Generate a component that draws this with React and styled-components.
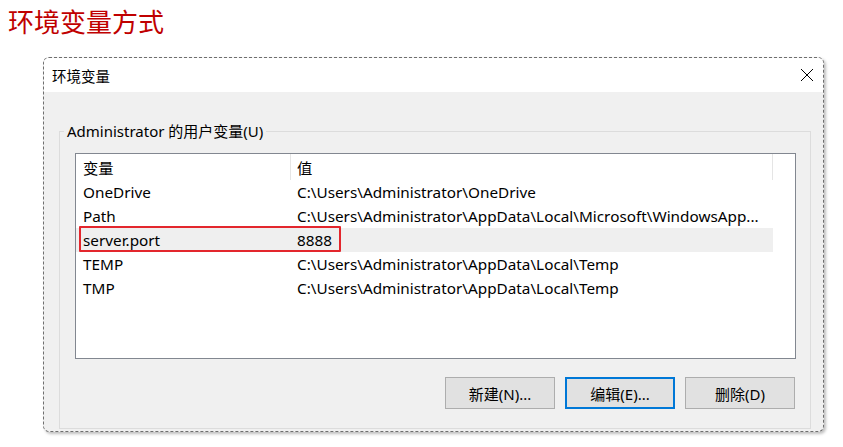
import React from 'react'
import styled, { createGlobalStyle } from 'styled-components'

const GlobalStyle = createGlobalStyle`
    body {
        margin: 0;
        background: #fff;
        font-family: "Noto Sans", "Noto Sans CJK SC", sans-serif;
    }
`

const Page = styled.div`
    width: 843px;
    height: 447px;
    padding: 4px 0 0 8px;
    box-sizing: border-box;
`

const Heading = styled.h1`
    margin: 0;
    font-family: "Noto Sans CJK SC", sans-serif;
    font-weight: 400;
    font-size: 26px;
    line-height: 34px;
    color: #c00000;
`

const Dialog = styled.div`
    width: 781px;
    height: 375px;
    margin: 19px 0 0 35px;
    box-sizing: border-box;
    border: 1px dashed #6f6f6f;
    border-radius: 6px;
    background: #f0f0f0;
    box-shadow: 2px 2px 3px rgba(0, 0, 0, 0.25);
    display: flex;
    flex-direction: column;
    overflow: hidden;
`

const TitleBar = styled.div`
    height: 34px;
    flex: none;
    background: #fff;
    display: flex;
    align-items: center;
    justify-content: space-between;
    padding: 0 9px 0 8px;
    font-family: "Noto Sans CJK SC", sans-serif;
    font-size: 14.5px;
    color: #000;
`

const Body = styled.div`
    flex: 1;
    display: flex;
    padding: 31px 12px 2px 15px;
`

const Group = styled.fieldset`
    flex: 1;
    margin: 0;
    border: 1px solid #dcdcdc;
    padding: 14px 14px 18px 15px;
    display: flex;
    flex-direction: column;
    min-width: 0;
`

const Legend = styled.legend`
    padding: 0 3px;
    margin-left: -11px;
    font-family: "Noto Sans", "Noto Sans CJK SC", sans-serif;
    font-size: 15px;
    line-height: 16px;
    color: #000;
`

const List = styled.div`
    position: relative;
    height: 206px;
    box-sizing: border-box;
    border: 1px solid #828790;
    background: #fff;
    font-size: 15.3px;
    color: #000;
`

const Row = styled.div`
    display: grid;
    grid-template-columns: 215px 482px;
    height: ${p => (p.$header ? '26px' : '24px')};
    align-items: center;
    background: ${p => (p.$selected ? '#efefef' : 'transparent')};
    width: 697px;
`

const Cell = styled.div`
    height: 100%;
    display: flex;
    align-items: center;
    padding-left: ${p => (p.$first ? '7px' : '6px')};
    white-space: nowrap;
    overflow: hidden;
    box-sizing: border-box;
    border-right: ${p => (p.$sep ? '1px solid #e5e5e5' : 'none')};
`

const Mark = styled.div`
    position: absolute;
    left: 3px;
    top: 72px;
    width: 262px;
    height: 26px;
    box-sizing: border-box;
    border: 2px solid #e3262d;
    border-radius: 1px;
    pointer-events: none;
`

const Buttons = styled.div`
    display: flex;
    justify-content: flex-end;
    gap: 10px;
    margin-top: 18px;
    padding-right: 1px;
`

const Button = styled.button`
    width: 110px;
    height: 32px;
    box-sizing: border-box;
    background: #e1e1e1;
    border: ${p => (p.$focused ? '2px solid #0078d7' : '1px solid #adadad')};
    font-family: "Noto Sans", "Noto Sans CJK SC", sans-serif;
    font-size: 15px;
    color: #000;
    padding: 0;
`

const rows = [
    ['OneDrive', 'C:\\Users\\Administrator\\OneDrive'],
    ['Path', 'C:\\Users\\Administrator\\AppData\\Local\\Microsoft\\WindowsApp...'],
    ['server.port', '8888'],
    ['TEMP', 'C:\\Users\\Administrator\\AppData\\Local\\Temp'],
    ['TMP', 'C:\\Users\\Administrator\\AppData\\Local\\Temp'],
]

const App = () => (
    <Page>
        <GlobalStyle />
        <Heading>环境变量方式</Heading>
        <Dialog>
            <TitleBar>
                <span>环境变量</span>
                <svg width="14" height="14" viewBox="0 0 14 14">
                    <path d="M1 1L13 13M13 1L1 13" stroke="#000" strokeWidth="1" />
                </svg>
            </TitleBar>
            <Body>
                <Group>
                    <Legend>Administrator 的用户变量(U)</Legend>
                    <List>
                        <Row $header>
                            <Cell $first $sep>变量</Cell>
                            <Cell $sep>值</Cell>
                        </Row>
                        {rows.map(([name, value]) => (
                            <Row key={name} $selected={name === 'server.port'}>
                                <Cell $first>{name}</Cell>
                                <Cell>{value}</Cell>
                            </Row>
                        ))}
                        <Mark />
                    </List>
                    <Buttons>
                        <Button>新建(N)...</Button>
                        <Button $focused>编辑(E)...</Button>
                        <Button>删除(D)</Button>
                    </Buttons>
                </Group>
            </Body>
        </Dialog>
    </Page>
)

export default App
